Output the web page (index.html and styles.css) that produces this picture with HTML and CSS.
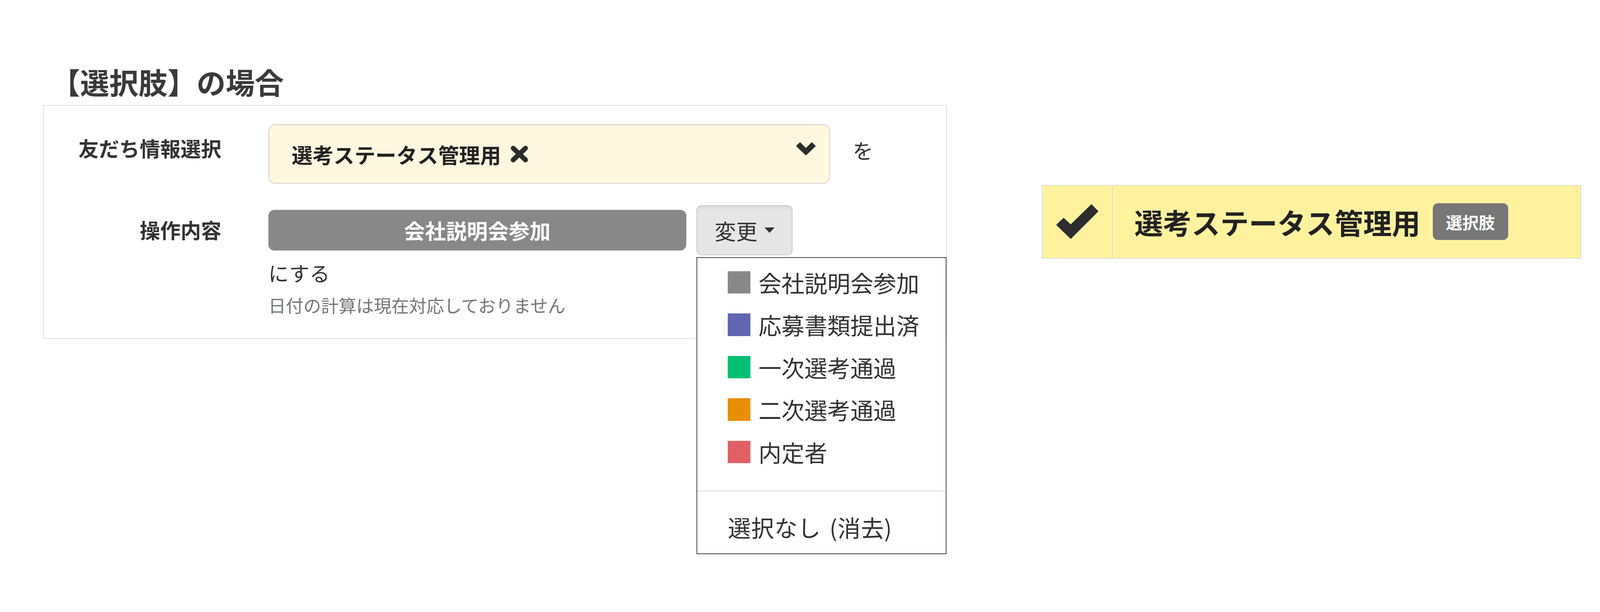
FILE: index.html
```html
<!DOCTYPE html>
<html lang="ja">
<head>
<meta charset="utf-8">
<title>選択肢の場合</title>
<link rel="stylesheet" href="styles.css">
</head>
<body>
<div class="page">
  <div class="left">
    <h2 class="title">【選択肢】の場合</h2>
    <div class="panel">
      <div class="label label-1">友だち情報選択</div>
      <div class="field field-1">
        <div class="select">
          <span class="select-text">選考ステータス管理用</span>
          <svg class="x-icon" viewBox="0 0 18 17" width="18" height="17"><path d="M3 2.8 L15 14.2 M15 2.8 L3 14.2" stroke="#2b2b2b" stroke-width="4.8" stroke-linecap="round" fill="none"/></svg>
          <svg class="chevron" viewBox="0 0 20 14" width="20" height="13"><polygon points="0,4 3.8,0.3 10,6.5 16.2,0.3 20,4 10,13.5" fill="#2b2b2b" stroke="#2b2b2b" stroke-width="0.6" stroke-linejoin="round"/></svg>
        </div>
        <span class="wo">を</span>
      </div>
      <div class="label label-2">操作内容</div>
      <div class="field field-2">
        <div class="action-row">
          <div class="value-bar">会社説明会参加</div>
          <div class="btn-wrap">
            <button class="btn">変更<span class="caret"></span></button>
            <ul class="menu">
              <li class="menu-item"><span class="swatch sw-gray"></span>会社説明会参加</li>
              <li class="menu-item"><span class="swatch sw-blue"></span>応募書類提出済</li>
              <li class="menu-item"><span class="swatch sw-green"></span>一次選考通過</li>
              <li class="menu-item"><span class="swatch sw-orange"></span>二次選考通過</li>
              <li class="menu-item"><span class="swatch sw-red"></span>内定者</li>
              <li class="menu-divider"></li>
              <li class="menu-item menu-clear">選択なし (消去)</li>
            </ul>
          </div>
        </div>
        <div class="suru">にする</div>
        <div class="help">日付の計算は現在対応しておりません</div>
      </div>
    </div>
  </div>
  <div class="right">
    <div class="picked">
      <div class="check-cell">
        <svg class="check" viewBox="-1 -1 44 37" width="42" height="35"><polygon points="0,20.6 6.9,14.1 14.2,20.9 35.6,0 42.1,6.5 14.2,34.4" fill="#2d2d2d" stroke="#2d2d2d" stroke-width="1.2" stroke-linejoin="round"/></svg>
      </div>
      <div class="picked-body">
        <span class="picked-text">選考ステータス管理用</span>
        <span class="badge">選択肢</span>
      </div>
    </div>
  </div>
</div>
</body>
</html>
```
FILE: styles.css
```css
html, body {
  margin: 0;
  padding: 0;
  background: #ffffff;
}

body {
  font-family: "Noto Sans CJK JP", "Noto Sans", sans-serif;
  color: #333;
}

.page {
  zoom: 2.615;
  min-height: 598px;
  box-sizing: border-box;
  display: flex;
  align-items: flex-start;
  padding: 62px 0 0 42px;
}

.left {
  width: 885px;
}

.title {
  margin: 0 0 5px 8px;
  font-size: 28.5px;
  line-height: 36px;
  font-weight: 700;
  color: #3a3a3a;
}

.panel {
  border: 1px solid #dedede;
  background: #fff;
  display: grid;
  grid-template-columns: 174px 1fr;
  column-gap: 46px;
  row-gap: 21px;
  padding: 18px 0 20px 0;
}

.label {
  text-align: right;
  font-size: 20px;
  line-height: 28px;
  font-weight: 700;
  color: #333;
}

.label-1 {
  padding-top: 9px;
}

.label-2 {
  padding-top: 10px;
}

.field-1 {
  display: flex;
  align-items: flex-start;
}

.select {
  width: 550px;
  height: 58px;
  box-sizing: border-box;
  background: #fef8e0;
  border: 1px solid #d2d0c6;
  border-radius: 7px;
  display: flex;
  align-items: center;
  padding: 0 13px 0 22px;
}

.select-text {
  font-size: 20.5px;
  font-weight: 700;
  color: #222;
  line-height: 28px;
}

.x-icon {
  margin-left: 9px;
}

.chevron {
  margin-left: auto;
  margin-bottom: 10px;
}

.wo {
  margin-left: 22px;
  padding-top: 11px;
  font-size: 20px;
  line-height: 28px;
  color: #333;
}

.field-2 {
  display: flex;
  flex-direction: column;
}

.action-row {
  display: flex;
  align-items: center;
}

.value-bar {
  width: 409px;
  height: 40px;
  background: #888888;
  border-radius: 6px;
  color: #fff;
  font-weight: 700;
  font-size: 20.5px;
  line-height: 40px;
  text-align: center;
}

.btn-wrap {
  position: relative;
  margin-left: 10px;
}

.btn {
  width: 94px;
  height: 49px;
  box-sizing: border-box;
  background: #e6e6e6;
  border: 1px solid #c9c9c9;
  border-radius: 5px;
  box-shadow: inset 0 2px 3px rgba(0,0,0,0.06);
  font-family: inherit;
  font-size: 21px;
  color: #333;
  display: flex;
  align-items: center;
  padding: 0 0 0 17px;
}

.caret {
  display: inline-block;
  margin-left: 7px;
  width: 0;
  height: 0;
  border-left: 5px solid transparent;
  border-right: 5px solid transparent;
  border-top: 5.5px solid #333;
}

.menu {
  position: absolute;
  top: calc(100% + 2px);
  left: 0;
  width: 245px;
  box-sizing: border-box;
  margin: 0;
  padding: 3px 0 5px 0;
  list-style: none;
  background: #fff;
  border: 1px solid #444;
  z-index: 2;
}

.menu-item {
  height: 41.5px;
  display: flex;
  align-items: center;
  padding-left: 30px;
  font-size: 22.5px;
  color: #333;
  white-space: nowrap;
}

.swatch {
  width: 22px;
  height: 22px;
  margin-right: 8px;
  flex: none;
}

.sw-gray { background: #888888; }
.sw-blue { background: #6066b2; }
.sw-green { background: #00c074; }
.sw-orange { background: #e88f00; }
.sw-red { background: #e26063; }

.menu-divider {
  height: 1px;
  background: #e5e5e5;
  margin: 17px 0 14px 0;
}

.menu-clear {
  font-size: 22.5px;
  word-spacing: 3px;
  letter-spacing: 0.3px;
}

.suru {
  margin-top: 3px;
  font-size: 20px;
  line-height: 28px;
  color: #333;
}

.help {
  margin-top: 6px;
  font-size: 17.2px;
  line-height: 24px;
  color: #777;
}

.right {
  margin-left: 93px;
  margin-top: 119px;
}

.picked {
  width: 528px;
  height: 72px;
  box-sizing: border-box;
  display: flex;
  background: #fff29f;
  border: 1px solid #dcdcdc;
}

.check-cell {
  width: 68px;
  flex: none;
  border-right: 1px solid #dcdcdc;
  display: flex;
  align-items: center;
  justify-content: center;
}

.picked-body {
  display: flex;
  align-items: center;
  padding-left: 21px;
}

.picked-text {
  font-size: 28px;
  font-weight: 700;
  color: #222;
}

.badge {
  margin-left: 12px;
  background: #777;
  color: #fff;
  font-size: 16px;
  font-weight: 700;
  line-height: 22px;
  padding: 7px 13px;
  border-radius: 5px;
}
```
